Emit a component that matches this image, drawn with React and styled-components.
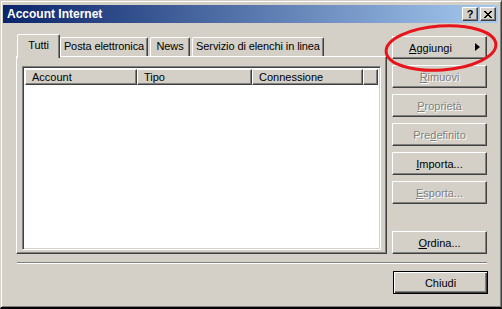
import React from 'react';
import styled, { createGlobalStyle } from 'styled-components';

const GlobalStyle = createGlobalStyle`
  html, body { margin: 0; padding: 0; background: #d4d0c8; }
  body { font-family: "Liberation Sans", Arial, sans-serif; font-size: 11px; color: #000; }
`;

const Win = styled.div`
  position: relative;
  width: 502px;
  height: 309px;
  box-sizing: border-box;
  background: #d4d0c8;
  border-style: solid;
  border-width: 1px 1px 2px 1px;
  border-color: #d4d0c8 #404040 #000 #d4d0c8;
  box-shadow: inset 1px 1px 0 #fff, inset -1px -1px 0 #808080;
  padding: 4px 3px 0 2px;
  overflow: hidden;
`;

const TitleBar = styled.div`
  height: 18px;
  display: flex;
  align-items: center;
  padding: 0 2px 0 4px;
  background: linear-gradient(to right, #0a246a, #a6caf0);
  color: #fff;
  font-weight: bold;
  font-size: 12px;
`;

const TitleText = styled.span`
  flex: 1;
`;

const CapButton = styled.div`
  width: 16px;
  height: 14px;
  margin-left: ${p => p.$gap || 0}px;
  box-sizing: border-box;
  background: #d4d0c8;
  border-style: solid;
  border-width: 1px;
  border-color: #fff #404040 #404040 #fff;
  box-shadow: inset -1px -1px 0 #808080;
  display: flex;
  align-items: center;
  justify-content: center;
  color: #000;
  font-weight: bold;
  font-size: 11px;
  line-height: 1;
`;

const Body = styled.div`
  padding: 11px 10px 0 13px;
`;

const MainRow = styled.div`
  display: flex;
  align-items: stretch;
`;

const TabControl = styled.div`
  width: 371px;
  display: flex;
  flex-direction: column;
`;

const TabStrip = styled.div`
  display: flex;
  align-items: flex-end;
  height: 22px;
  padding-left: 3px;
  position: relative;
  z-index: 1;
`;

const Tab = styled.div`
  box-sizing: border-box;
  width: ${p => p.$w}px;
  height: ${p => (p.$active ? 24 : 19)}px;
  margin-right: ${p => (p.$active ? -2 : 0)}px;
  margin-bottom: ${p => (p.$active ? -2 : 0)}px;
  margin-left: ${p => (p.$active ? -2 : 2)}px;
  background: #d4d0c8;
  border-style: solid;
  border-width: 1px 1px 0 1px;
  border-color: #fff #404040 transparent #fff;
  border-radius: 2px 2px 0 0;
  box-shadow: inset -1px 0 0 #808080;
  padding-top: ${p => (p.$active ? 4 : 2)}px;
  text-align: center;
  white-space: nowrap;
  letter-spacing: -0.1px;
  &:first-child { margin-left: ${p => (p.$active ? -2 : 0)}px; }
`;

const Panel = styled.div`
  box-sizing: border-box;
  height: 198px;
  border-style: solid;
  border-width: 1px;
  border-color: #fff #404040 #404040 #fff;
  box-shadow: inset -1px -1px 0 #808080;
  padding: 9px 5px 3px 5px;
`;

const ListView = styled.div`
  box-sizing: border-box;
  height: 100%;
  background: #fff;
  border-style: solid;
  border-width: 1px;
  border-color: #808080 #fff #fff #808080;
  box-shadow: inset 1px 1px 0 #404040, inset -1px -1px 0 #d4d0c8;
  padding: 2px;
`;

const HeaderRow = styled.div`
  display: flex;
  height: 16px;
`;

const HeaderCell = styled.div`
  box-sizing: border-box;
  width: ${p => p.$w}px;
  flex: ${p => (p.$fill ? 1 : 'none')};
  background: #d4d0c8;
  border-style: solid;
  border-width: 1px;
  border-color: #fff #404040 #404040 #fff;
  box-shadow: inset -1px -1px 0 #808080;
  padding: 1px 0 0 6px;
  white-space: nowrap;
  overflow: hidden;
`;

const ButtonColumn = styled.div`
  width: 95px;
  margin-left: 5px;
  padding-top: 2px;
  display: flex;
  flex-direction: column;
  gap: 6px;
`;

const Button = styled.div`
  box-sizing: border-box;
  height: 23px;
  width: 95px;
  background: #d4d0c8;
  border-style: solid;
  border-width: 1px;
  border-color: ${p => (p.$default ? '#000' : '#fff #404040 #404040 #fff')};
  box-shadow: ${p =>
    p.$default
      ? 'inset 1px 1px 0 #fff, inset -1px -1px 0 #404040, inset -2px -2px 0 #808080'
      : 'inset -1px -1px 0 #808080'};
  display: flex;
  align-items: center;
  justify-content: center;
  padding-right: ${p => (p.$menu ? 18 : 0)}px;
  position: relative;
  color: ${p => (p.$disabled ? '#808080' : '#000')};
  text-shadow: ${p => (p.$disabled ? '1px 1px 0 #fff' : 'none')};
  margin-top: ${p => (p.$push ? 'auto' : '0')};
  u { text-decoration: underline; }
`;

const Arrow = styled.span`
  position: absolute;
  right: 6px;
  top: 6px;
  width: 0;
  height: 0;
  border-top: 4.5px solid transparent;
  border-bottom: 4.5px solid transparent;
  border-left: 5px solid #000;
`;

const Separator = styled.div`
  margin: 8px 0 0 1px;
  width: 470px;
  height: 1px;
  background: #808080;
  border-bottom: 1px solid #fff;
`;

const Footer = styled.div`
  display: flex;
  justify-content: flex-end;
  padding-top: 7px;
`;

const Annotation = styled.svg`
  position: absolute;
  left: 0;
  top: 0;
  pointer-events: none;
`;

const tabs = [
  { label: 'Tutti', w: 43, active: true },
  { label: 'Posta elettronica', w: 88 },
  { label: 'News', w: 40 },
  { label: 'Servizio di elenchi in linea', w: 132 },
];

const columns = [
  { label: 'Account', w: 112 },
  { label: 'Tipo', w: 115 },
  { label: 'Connessione', w: 111 },
  { label: '', fill: true },
];

export default function App() {
  return (
    <>
      <GlobalStyle />
      <Win>
        <TitleBar>
          <TitleText>Account Internet</TitleText>
          <CapButton>?</CapButton>
          <CapButton $gap={2}>
            <svg width="8" height="7" viewBox="0 0 8 7">
              <path d="M0 0 L7 7 M1 0 L8 7 M7 0 L0 7 M8 0 L1 7" stroke="#000" strokeWidth="1" />
            </svg>
          </CapButton>
        </TitleBar>
        <Body>
          <MainRow>
            <TabControl>
              <TabStrip>
                {tabs.map(t => (
                  <Tab key={t.label} $w={t.w} $active={t.active}>
                    {t.label}
                  </Tab>
                ))}
              </TabStrip>
              <Panel>
                <ListView>
                  <HeaderRow>
                    {columns.map((c, i) => (
                      <HeaderCell key={i} $w={c.w} $fill={c.fill}>
                        {c.label}
                      </HeaderCell>
                    ))}
                  </HeaderRow>
                </ListView>
              </Panel>
            </TabControl>
            <ButtonColumn>
              <Button $menu>
                <span><u>A</u>ggiungi</span>
                <Arrow />
              </Button>
              <Button $disabled><span><u>R</u>imuovi</span></Button>
              <Button $disabled><span><u>P</u>roprietà</span></Button>
              <Button $disabled><span>Pre<u>d</u>efinito</span></Button>
              <Button><span><u>I</u>mporta...</span></Button>
              <Button $disabled><span><u>E</u>sporta...</span></Button>
              <Button $push><span><u>O</u>rdina...</span></Button>
            </ButtonColumn>
          </MainRow>
          <Separator />
          <Footer>
            <Button $default>Chiudi</Button>
          </Footer>
        </Body>
        <Annotation width="502" height="309">
          <ellipse cx="440" cy="47" rx="55" ry="22" fill="none" stroke="#e8141b" strokeWidth="3" transform="rotate(-4 440 47)" />
        </Annotation>
      </Win>
    </>
  );
}
